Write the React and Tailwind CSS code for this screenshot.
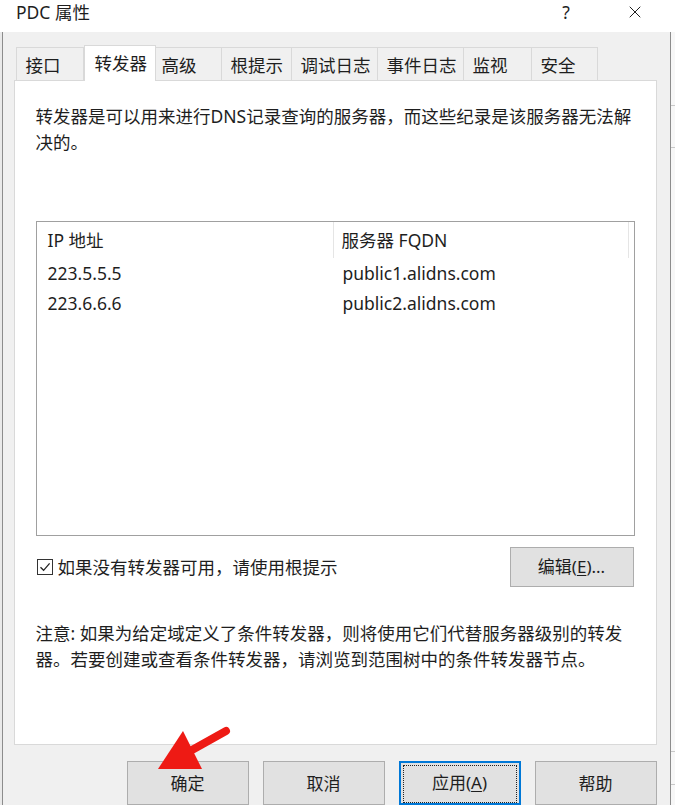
import { X } from 'lucide-react';

const tabs = [
  { label: '接口', w: 'w-[68px]' },
  { label: '转发器', w: 'w-[72px]', active: true },
  { label: '高级', w: 'w-[66px]', pl: 'pl-[6px]' },
  { label: '根提示', w: 'w-[70px]' },
  { label: '调试日志', w: 'w-[86px]' },
  { label: '事件日志', w: 'w-[86px]' },
  { label: '监视', w: 'w-[68px]' },
  { label: '安全', w: 'w-[66px]' },
];

const forwarders = [
  { ip: '223.5.5.5', fqdn: 'public1.alidns.com' },
  { ip: '223.6.6.6', fqdn: 'public2.alidns.com' },
];

const DialogButton = ({ children, primary }) =>
  primary ? (
    <button className="w-[122px] h-[44px] bg-[#e1e1e1] text-[17px] flex items-start justify-center border-2 border-[#0078d7] p-[2px]">
      <span className="w-full h-[38px] border border-dotted border-[#222] flex items-center justify-center pb-[3px]">
        {children}
      </span>
    </button>
  ) : (
    <button className="w-[122px] h-[44px] bg-[#e1e1e1] text-[17px] flex items-center justify-center border border-[#adadad] pt-[2px]">
      {children}
    </button>
  );

const Arrow = () => (
  <svg className="absolute left-0 top-0 pointer-events-none" width="675" height="805">
    <line x1="226" y1="731" x2="192" y2="750" stroke="#ee1a14" strokeWidth="8" strokeLinecap="round" />
    <polygon points="158,769 183,731 202,769" fill="#ee1a14" />
  </svg>
);

export default function App() {
  return (
    <div className="relative w-[675px] h-[805px] overflow-hidden bg-white text-[#1e1e1e] font-['Noto_Sans','Noto_Sans_CJK_SC',sans-serif] text-[17.5px] leading-[26px]">
      {/* title bar */}
      <div className="h-[32px] flex items-center pr-[7px]">
        <div className="pl-[16px] flex-1 -mt-[8px]">PDC 属性</div>
        <div className="w-[22px] text-center -mt-[8px] mr-[48px]">?</div>
        <X className="w-[20px] h-[20px] -mt-[8px] mr-[23px]" strokeWidth={1.2} />
      </div>

      <div className="flex h-[773px]">
        <div className="w-[2px] bg-[#e9e9e9]" />
        {/* window body */}
        <div className="flex-1 bg-[#f0f0f0] border-l border-r border-[#8c8c8c] flex flex-col pl-[11px] pr-[13px]">
          {/* tabs */}
          <div className="flex items-end h-[48px] pl-[2px]">
            {tabs.map((t) =>
              t.active ? (
                <div
                  key={t.label}
                  className={`${t.w} h-[36px] -mb-px relative z-10 bg-white border border-b-0 border-[#d9d9d9] pl-[10px] pt-[4px]`}
                >
                  {t.label}
                </div>
              ) : (
                <div
                  key={t.label}
                  className={`${t.w} h-[33px] border-t border-r border-[#d9d9d9] first:border-l ${t.pl || 'pl-[9px]'} pt-[4px] bg-[#f0f0f0]`}
                >
                  {t.label}
                </div>
              )
            )}
          </div>

          {/* tab panel */}
          <div className="h-[671px] bg-white border border-[#d9d9d9] px-[21px] pt-[22px] flex flex-col">
            <p>
              转发器是可以用来进行DNS记录查询的服务器，而这些纪录是该服务器无法解
              <br />
              决的。
            </p>

            {/* forwarders list */}
            <div className="mt-[66px] w-[599px] h-[315px] border border-[#a0a0a0]">
              <div className="flex h-[36px] items-center">
                <div className="w-[297px] pl-[11px] h-full flex items-center border-r border-[#e5e5e5]">IP 地址</div>
                <div className="w-[295px] pl-[8px] h-full flex items-center border-r border-[#e5e5e5]">服务器 FQDN</div>
              </div>
              {forwarders.map((f) => (
                <div key={f.ip} className="flex h-[30px] items-center">
                  <div className="w-[297px] pl-[11px]">{f.ip}</div>
                  <div className="pl-[9px]">{f.fqdn}</div>
                </div>
              ))}
            </div>

            <div className="mt-[11px] w-[598px] flex items-center justify-between">
              <label className="flex items-center gap-[5px] pl-[1px]">
                <span className="w-[16px] h-[16px] border border-[#333] bg-white flex items-center justify-center">
                  <svg width="12" height="12" viewBox="0 0 12 12">
                    <path d="M1.5 6.2 L4.6 9.3 L10.6 2.3" fill="none" stroke="#222" strokeWidth="1.3" />
                  </svg>
                </span>
                如果没有转发器可用，请使用根提示
              </label>
              <button className="w-[124px] h-[40px] bg-[#e1e1e1] border border-[#adadad] text-[17px]">
                编辑(<span className="underline underline-offset-2">E</span>)...
              </button>
            </div>

            <p className="mt-[33px]">
              注意: 如果为给定域定义了条件转发器，则将使用它们代替服务器级别的转发
              <br />
              器。若要创建或查看条件转发器，请浏览到范围树中的条件转发器节点。
            </p>
          </div>

          {/* dialog buttons */}
          <div className="mt-[16px] flex justify-end gap-[14px]">
            <DialogButton>确定</DialogButton>
            <DialogButton>取消</DialogButton>
            <DialogButton primary>
              <span>
                应用(<span className="underline underline-offset-2">A</span>)
              </span>
            </DialogButton>
            <DialogButton>帮助</DialogButton>
          </div>
        </div>
        <div className="w-[6px] bg-[#f7f7f7] flex flex-col">
          <div className="h-[73px]" />
          <div className="h-px bg-[#c8c8c8]" />
          <div className="h-[41px]" />
          <div className="h-px bg-[#c8c8c8]" />
          <div className="h-[603px]" />
          <div className="h-px bg-[#c8c8c8]" />
          <div className="h-[32px]" />
          <div className="h-px bg-[#c8c8c8]" />
        </div>
      </div>

      <Arrow />
    </div>
  );
}
